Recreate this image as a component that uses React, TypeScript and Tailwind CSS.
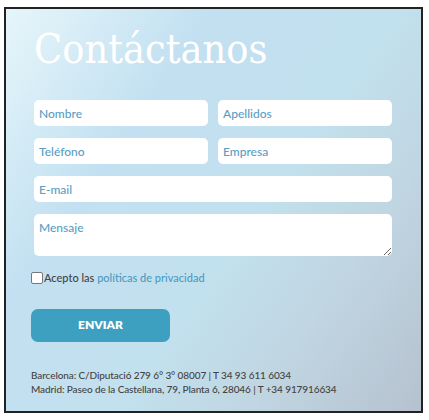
import React from "react";

const inputCls =
  "h-[26px] w-full rounded-[5px] bg-white px-[5px] text-[12px] font-medium text-[#5a9ec4] placeholder:text-[#5a9ec4] outline-none";

export default function App() {
  return (
    <div className="w-[429px] h-[420px] bg-white pt-[7px] pl-[4px]" style={{ fontFamily: "Lato, 'Open Sans', sans-serif" }}>
      <div className="w-[419px] h-[406px] border-2 border-[#222] bg-[linear-gradient(125deg,#e6f6fa_0%,#c2e0f1_30%,#c2e1ee_55%,#c0d6e2_75%,#b6c1cf_100%)] pl-[28px] pr-[29px] flex flex-col">
        <h1
          className="mt-[16px] h-[48px] text-[41px] leading-[48px] text-white font-stretch-condensed"
          style={{ fontFamily: "'DejaVu Serif', serif", fontWeight: 300 }}
        >
          Contáctanos
        </h1>
        <div className="mt-[27px] grid grid-cols-2 gap-x-[10px] gap-y-[12px]">
          <input className={inputCls} placeholder="Nombre" />
          <input className={inputCls} placeholder="Apellidos" />
          <input className={inputCls} placeholder="Teléfono" />
          <input className={inputCls} placeholder="Empresa" />
          <input className={inputCls + " col-span-2"} placeholder="E-mail" />
          <textarea
            className="col-span-2 h-[42px] w-full rounded-[5px] bg-white px-[5px] pt-[5px] text-[12px] font-medium text-[#5a9ec4] placeholder:text-[#5a9ec4] outline-none"
            placeholder="Mensaje"
          />
        </div>
        <label className="mt-[14px] -ml-[3px] flex items-center gap-[1px] text-[11px] font-medium text-[#444]">
          <span className="inline-block w-[12px] h-[12px] border border-[#777] rounded-[2px] bg-white" />
          <span>
            Acepto las <span className="text-[#4a9bc0]">políticas de privacidad</span>
          </span>
        </label>
        <button className="mt-[22px] -ml-[3px] h-[33px] w-[139px] rounded-[7px] bg-[#3ea0c1] text-[12px] font-extrabold text-white">
          ENVIAR
        </button>
        <div className="mt-[26px] -ml-[3px] text-[10px] leading-[14px] font-medium text-[#444] tracking-[-0.1px]">
          <p>Barcelona: C/Diputació 279 6° 3° 08007 | T 34 93 611 6034</p>
          <p>Madrid: Paseo de la Castellana, 79, Planta 6, 28046 | T +34 917916634</p>
        </div>
      </div>
    </div>
  );
}
